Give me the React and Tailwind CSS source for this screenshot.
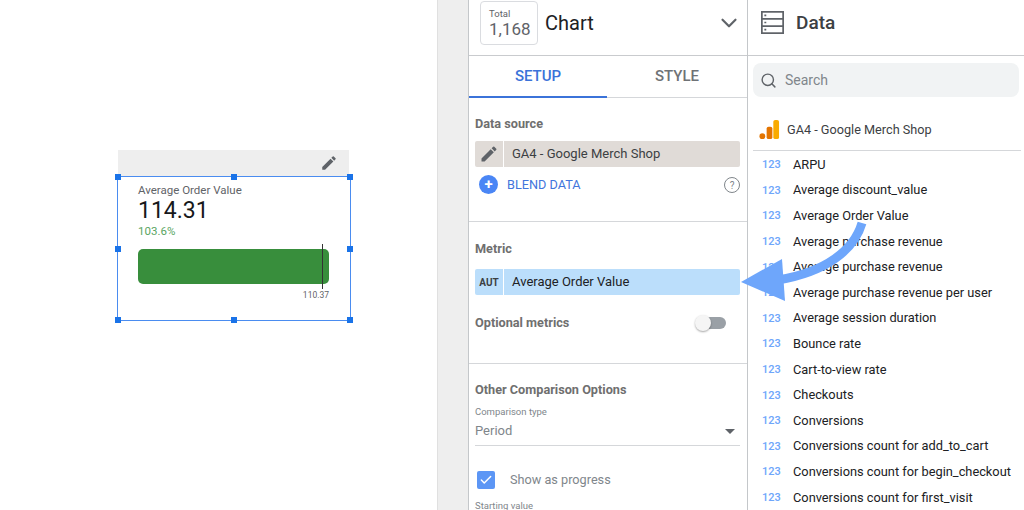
import React from 'react';
import { Search, ChevronDown, Check } from 'lucide-react';

const fields = [
  'ARPU',
  'Average discount_value',
  'Average Order Value',
  'Average purchase revenue',
  'Average purchase revenue',
  'Average purchase revenue per user',
  'Average session duration',
  'Bounce rate',
  'Cart-to-view rate',
  'Checkouts',
  'Conversions',
  'Conversions count for add_to_cart',
  'Conversions count for begin_checkout',
  'Conversions count for first_visit',
];

const EditIcon = ({ className }) => (
  <svg viewBox="0 0 24 24" className={className} fill="currentColor">
    <path d="M3 17.25V21h3.75L17.81 9.94l-3.75-3.75L3 17.25zM20.71 7.04a1 1 0 0 0 0-1.41l-2.34-2.34a1 1 0 0 0-1.41 0l-1.83 1.83 3.75 3.75 1.83-1.83z" />
  </svg>
);

const Handle = ({ className }) => (
  <span className={`absolute w-[6px] h-[6px] bg-[#1a73e8] ${className}`} />
);

const SectionLabel = ({ children }) => (
  <div className="text-[12.7px] leading-[16px] font-bold text-[#6f6f6f]">{children}</div>
);

const Scorecard = () => (
  <div className="w-[234px]">
    {/* hover bar above the chart */}
    <div className="h-[26px] w-[231px] ml-px bg-[#eeeeee] flex items-center justify-end pr-[11px]">
      <EditIcon className="w-[18px] h-[18px] text-[#5f6368]" />
    </div>
    <div className="relative h-[145px] border border-[#4a8cf0] pl-[20px] pt-[6px]">
      <Handle className="-left-[3px] -top-[3px]" />
      <Handle className="left-[113px] -top-[3px]" />
      <Handle className="-right-[3px] -top-[3px]" />
      <Handle className="-left-[3px] top-[69px]" />
      <Handle className="-right-[3px] top-[69px]" />
      <Handle className="-left-[3px] -bottom-[3px]" />
      <Handle className="left-[113px] -bottom-[3px]" />
      <Handle className="-right-[3px] -bottom-[3px]" />
      <div className="text-[11.5px] leading-[14px] text-[#5f6368]">Average Order Value</div>
      <div className="text-[23px] leading-[26px] mt-[1px] text-[#17181a]">114.31</div>
      <div className="text-[11.5px] leading-[14px] text-[#5aa562]">103.6%</div>
      <div className="relative w-[191px] h-[35px] mt-[11px] rounded-[5px] bg-[#388e3c]">
        <span className="absolute left-[184px] -top-[5px] w-px h-[45px] bg-[#333333]" />
      </div>
      <div className="w-[191px] text-right text-[8.5px] leading-[10px] mt-[6px] text-[#5f6368]">110.37</div>
    </div>
  </div>
);

const SetupPanel = () => (
  <div className="w-[280px] h-full shrink-0 border-x border-[#c4c7ca] flex flex-col overflow-hidden">
    <div className="h-[56px] shrink-0 border-b border-[#c9cbce] flex items-start pl-[11px] pr-[5px] pt-[1px]">
      <div className="w-[58px] h-[44px] border border-[#dadce0] rounded-[4px] pl-[8px] pt-[6px]">
        <div className="text-[9.5px] leading-[11px] text-[#5f6368]">Total</div>
        <div className="text-[17px] leading-[20px] text-[#5f6368]">1,168</div>
      </div>
      <div className="ml-[7px] mt-[11px] text-[20px] leading-[22px] text-[#202124]">Chart</div>
      <ChevronDown className="ml-auto mt-[9px] w-[26px] h-[26px] text-[#5f6368]" strokeWidth={2} />
    </div>

    <div className="h-[42px] shrink-0 flex border-b border-[#d5d7da] text-[15px] font-medium">
      <div className="w-[138px] -mb-px border-b-2 border-[#3b73d9] text-[#3b73d9] flex items-center justify-center">SETUP</div>
      <div className="flex-1 text-[#6f7276] flex items-center justify-center">STYLE</div>
    </div>

    <div className="h-[124px] shrink-0 border-b border-[#d5d7da] pl-[6px] pr-[7px] pt-[18px]">
      <SectionLabel>Data source</SectionLabel>
      <div className="flex h-[26px] mt-[9px] rounded-[2px] overflow-hidden bg-[#e0dbd7] text-[13px] text-[#3c4043]">
        <div className="w-[29px] flex items-center justify-center border-r border-white">
          <EditIcon className="w-[20px] h-[20px] text-[#5f6368]" />
        </div>
        <div className="pl-[8px] flex items-center">GA4 - Google Merch Shop</div>
      </div>
      <div className="flex items-center h-[20px] mt-[8px] pl-[4px]">
        <span className="w-[19px] h-[19px] -mt-[2px] rounded-full bg-[#4a86f5] text-white flex items-center justify-center text-[15px] leading-none font-bold">+</span>
        <span className="ml-[9px] text-[12.7px] text-[#4275dc]">BLEND DATA</span>
        <span className="ml-auto w-[16px] h-[16px] rounded-full border border-[#80868b] text-[#80868b] text-[10px] flex items-center justify-center">?</span>
      </div>
    </div>

    <div className="h-[142px] shrink-0 border-b border-[#d5d7da] pl-[6px] pr-[7px] pt-[19px]">
      <SectionLabel>Metric</SectionLabel>
      <div className="flex h-[26px] mt-[12px] rounded-[2px] overflow-hidden bg-[#bbdefb] text-[13px] text-[#202124]">
        <div className="w-[29px] flex items-center justify-center border-r border-white text-[10px] font-bold text-[#3c4043]">AUT</div>
        <div className="pl-[8px] flex items-center">Average Order Value</div>
      </div>
      <div className="flex items-center h-[20px] mt-[18px] pr-[14px]">
        <SectionLabel>Optional metrics</SectionLabel>
        <div className="relative ml-auto w-[26px] h-[12px] rounded-full bg-[#9aa0a6]">
          <span className="absolute -left-[5px] -top-[2px] w-[16px] h-[16px] rounded-full bg-[#f5f5f5] shadow-[0_1px_2px_rgba(0,0,0,0.35)]" />
        </div>
      </div>
    </div>

    <div className="flex-1 pl-[6px] pr-[7px] pt-[18px]">
      <SectionLabel>Other Comparison Options</SectionLabel>
      <div className="text-[9.5px] leading-[12px] mt-[8px] text-[#80868b]">Comparison type</div>
      <div className="flex items-center justify-between h-[22px] mt-[2px] pb-[3px] border-b border-[#d5d7da] box-content text-[13px] text-[#80868b]">
        <span>Period</span>
        <span className="w-0 h-0 mr-[5px] border-x-[5px] border-x-transparent border-t-[5px] border-t-[#5f6368]" />
      </div>
      <div className="flex items-center mt-[24px] pl-[2px]">
        <span className="w-[18px] h-[18px] rounded-[2px] bg-[#5c96f5] flex items-center justify-center">
          <Check className="w-[14px] h-[14px] text-white" strokeWidth={2.5} />
        </span>
        <span className="ml-[15px] text-[12.7px] text-[#80868b]">Show as progress</span>
      </div>
      <div className="text-[9.5px] leading-[12px] mt-[11px] text-[#80868b]">Starting value</div>
    </div>
  </div>
);

const DataPanel = () => (
  <div className="flex-1 h-full flex flex-col overflow-hidden">
    <div className="h-[56px] shrink-0 border-b border-[#c9cbce] flex items-start pt-[11px] pl-[13px]">
      <svg viewBox="0 0 24 24" className="w-[23px] h-[23px] text-[#5f6368]" fill="none" stroke="currentColor" strokeWidth="1.8">
        <rect x="0.9" y="0.9" width="22.2" height="22.2" />
        <path d="M1 8.2h22M1 15.8h22" />
        <path d="M3.5 4.5h2M3.5 12h2M3.5 19.5h2" />
      </svg>
      <span className="ml-[12px] text-[19px] leading-[23px] font-medium text-[#3c4043]">Data</span>
    </div>
    <div className="px-[5px] pt-[7px]">
      <div className="h-[34px] rounded-[8px] bg-[#f1f3f4] flex items-center pl-[7px]">
        <Search className="w-[17px] h-[17px] text-[#5f6368]" strokeWidth={2} />
        <span className="ml-[8px] text-[14px] text-[#80868b]">Search</span>
      </div>
    </div>
    <div className="ml-[5px] mr-[3px] h-[54px] border-b border-[#d5d7da] flex items-center pt-[13px] pl-[6px] text-[12.7px] text-[#3c4043]">
      <svg viewBox="0 0 22 22" className="w-[21px] h-[21px]">
        <rect x="15" y="1" width="6" height="20" rx="2" fill="#f9ab00" />
        <rect x="8" y="8" width="6" height="13" rx="2" fill="#e37400" />
        <circle cx="3.5" cy="18" r="3" fill="#e37400" />
      </svg>
      <span className="ml-[7px]">GA4 - Google Merch Shop</span>
    </div>
    <div className="pl-[14px] pt-[1px]">
      {fields.map((name, i) => (
        <div key={i} className="flex items-center h-[25.6px] text-[12.8px] whitespace-nowrap text-[#202124]">
          <span className="w-[31px] shrink-0 pt-[2px] text-[11px] font-medium text-[#6ea6fb]">123</span>
          {name}
        </div>
      ))}
    </div>
  </div>
);

export default function App() {
  return (
    <div className="relative w-[1024px] h-[510px] flex overflow-hidden bg-white font-['Roboto',sans-serif]">
      <div className="w-[437px] h-full shrink-0 pl-[117px] pt-[150px]">
        <Scorecard />
      </div>
      <div className="w-[31px] h-full shrink-0 bg-[#eeeeee] border-l border-[#e0e0e0]" />
      <SetupPanel />
      <DataPanel />

      {/* drag arrow over the panels */}
      <svg className="absolute left-0 top-0 w-[1024px] h-[510px] pointer-events-none" viewBox="0 0 1024 510" fill="none">
        <path d="M862 223 C854 250 826 272 778 280" stroke="#6ea6fb" strokeWidth="9" />
        <path d="M741 282 L782 259 L785 301 Z" fill="#6ea6fb" />
      </svg>
    </div>
  );
}
